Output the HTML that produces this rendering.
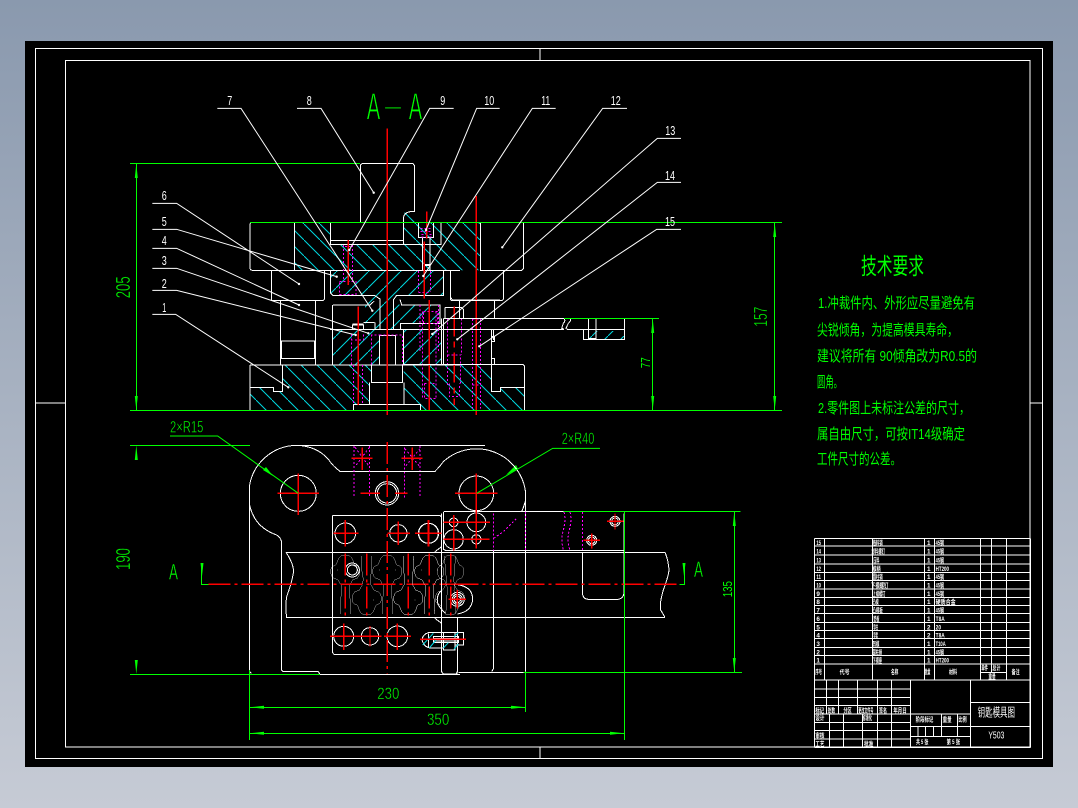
<!DOCTYPE html>
<html lang="zh"><head><meta charset="utf-8"><title>钥匙模具图</title>
<style>
html,body{margin:0;padding:0;width:1078px;height:808px;overflow:hidden;background:linear-gradient(180deg,#8a99ae 0%,#c6cbd5 100%)}
svg{position:absolute;left:0;top:0;display:block}
.l *{vector-effect:non-scaling-stroke}
.w{fill:none;stroke:#fff;stroke-width:1;shape-rendering:crispEdges}
.g{fill:none;stroke:#00ff00;stroke-width:1;shape-rendering:crispEdges}
.r{fill:none;stroke:#ff0000;stroke-width:1.2;shape-rendering:crispEdges}
.c{stroke-dasharray:22 4 3 4}
.p{fill:none;stroke:#ff00ff;stroke-width:1;stroke-dasharray:2 2;shape-rendering:crispEdges}
.ld{fill:none;stroke:#fff;stroke-width:1}
.gl{fill:none;stroke:#00ff00;stroke-width:1}
text{font-family:"Liberation Sans","Noto Sans CJK SC",sans-serif}
.gt{fill:#00ff00;stroke:#000;stroke-width:.4}
.gs{fill:#00ff00}
.gT{fill:#00ff00;stroke:#000;stroke-width:.9}
.wt{fill:#fff;font-size:13px}
.tb text{fill:#fff;font-size:19px;font-weight:700}
.cn{fill:#00ff00;font-size:15px}
</style></head><body>
<svg width="1078" height="808" viewBox="0 0 1078 808" xmlns="http://www.w3.org/2000/svg">
<defs>
<pattern id="hb" width="16" height="16" patternUnits="userSpaceOnUse"><path d="M-1 -1L17 17" stroke="#00d8e0" stroke-width="1" fill="none"/></pattern>
<pattern id="hf" width="16" height="16" patternUnits="userSpaceOnUse"><path d="M17 -1L-1 17" stroke="#00d8e0" stroke-width="1" fill="none"/></pattern>
<g id="key"><path d="M-16 132L-14 85L-10 62L-13 45L-22 30Q-30 26 -36 24Q-44 16 -44 4Q-44 -8 -36 -12Q-28 -14 -26 -20Q-20 -40 -10 -44H10Q20 -40 26 -20Q28 -14 36 -12Q44 -8 44 4Q44 16 36 24Q30 26 22 30L13 45L11 62L14 85L16 132"/></g>
</defs>
<rect x="25" y="41" width="1028" height="726" fill="#000"/>

<!-- hatches -->
<g fill="url(#hb)">
<polygon points="294,222.5 330.5,222.5 330.5,244.5 403.5,244.5 403.5,222.5 480.7,222.5 480.7,270.3 294,270.3"/>
<polygon points="403.5,222.5 403.5,213 410,211 414.7,211 414.7,222.5"/>
<polygon points="282.3,365 371.3,365 371.3,382.7 369.3,382.7 369.3,404 353.3,404 353.3,410 250,410 250,387.3 273.3,387.3 273.3,391.3 282.3,391.3"/>
<polygon points="403.7,365 491.7,365 491.7,391.3 500.7,391.3 500.7,387.3 524.3,387.3 524.3,410 420.7,410 420.7,404 404.3,404 404.3,382.7 403.7,382.7"/>
</g>
<g fill="url(#hf)">
<polygon points="330.5,270.3 443.7,270.3 443.7,295.3 398,295.3 393.5,300 393.5,329 381,329 381,300 375,295.3 330.5,295.3"/>
<polygon points="400,305 440,305 440,323 400,323 400,329 393.5,329 393.5,300"/>
<polygon points="365,296 381,296 381,329 365,329"/>
<polygon points="332.3,329.5 380,329.5 380,365 332.3,365"/>
<polygon points="403.5,329.5 441.5,329.5 441.5,365 403.5,365"/>
<polygon points="583,331 624.5,331 624.5,339.5 583,339.5"/>
</g>

<!-- frame -->
<g class="w">
<rect x="35.5" y="48.5" width="1007" height="710"/>
<rect x="65.5" y="60.5" width="964.5" height="686.5"/>
<path d="M35 403H65M1030 403H1043M540 48V60M540 747V759"/>
</g>

<!-- Front view Z1 (left) -->
<g class="l" transform="translate(120 80) scale(.33333)">
<g class="w">
<path d="M721 427V255L728 250H878L884 257V395H870Q852 398 850 415V493"/>
<path d="M396 427Q390 428 390 434V565Q392 571 398 571H1020M523 427V571M631 427V493H850M631 481H850"/>
<path d="M454 571V662H608Q614 660 614 652V571"/>
<path d="M481 662V855M587 662V855M481 783H587M484 783V835M584 783V835M481 835H587"/>
<path d="M390 855H1020M390 855V990M390 922H460V934H487V855"/>
</g>
</g>

<!-- Center Z9 -->
<g class="l" transform="translate(330 215) scale(.33333)">
<g class="w">
<path d="M265 22V68H310V22M333 22V88H220M277 68V167M300 68V167M285 148H300M285 152H300"/>
<path d="M2 167V235L8 241H120L133 241L150 252V343M190 343V255L200 241H340V167"/>
<path d="M210 253L215 270H330V325H212V343"/>
<path d="M7 448V275Q7 270 12 270H120L133 258M100 322H133M135 322V343M67 343V330H100V343M67 327H100"/>
<path d="M0 343H510M148 448V362H197V448M220 343V448"/>
<path d="M124 450V502H218V450M118 502V568H222V502M70 585V568H272V585"/>
<path d="M335 310V448M340 310V448M340 310H510M362 167V248L368 255H510M388 255V310M493 255V310"/>
<path d="M345 310V280Q345 277 350 277H395L400 283V310"/>
<path d="M485 343V448M490 343V375"/>
</g>
<g class="p">
<path d="M40 90V200M68 90V200M45 95H62M28 200H78V238H28ZM28 238H78"/>
<path d="M265 168V230M302 168V230M265 232H302"/>
<path d="M272 40H306M272 50H306M275 66H305M275 58H305"/>
<path d="M270 270V410M325 270V410M280 290H322V325H280ZM278 290V550M318 290V550M283 505V550H318M283 505H318"/>
<path d="M125 448V360H148M197 360H218V448M148 360H197"/>
<path d="M65 358V450M100 358V375H67M70 450V565M98 450V565"/>
<path d="M352 310V420M395 310V420M352 420H392V510M352 420V510M358 505V545H388V505"/>
<path d="M428 312V580M452 312V580M428 312H452M428 510H452"/>
</g>
<g class="r">
<path d="M172 -260V600"/>
<path d="M439 -57V600"/>
<path d="M55 75V210M290 -10V70M283 80V250M298 255V585M85 275V570"/>
<path d="M373 275V570" style="stroke-dasharray:30 5 6 5"/>
</g>
</g>

<!-- Front view right Z2 -->
<g class="l" transform="translate(400 80) scale(.33333)">
<g class="w">
<path d="M240 427H371V565L365 571H240M242 427V571"/>
<path d="M130 715H492M130 748H492M492 715Q498 722 490 730L485 745L492 748M510 715Q515 722 505 730L498 745L502 748H550M550 748H673M673 715V778H550V748M565 715V775H588V715"/>
<path d="M275 748V770H283V785H275V835H283V853M10 853H368L373 858V990M275 853V934H302V922H373"/>
<path d="M151 571V655Q151 662 158 662H305Q311 660 311 652V571"/>
</g>
</g>

<!-- green dim front -->
<g class="g">
<path d="M130 163.5H360M136.5 163.5V410M130 410.5H782M250 222.5H782M774.5 222.5V410M564 318.5H659M652.5 318.5V410"/>
</g>
<g fill="#00ff00">
<polygon points="136.3,163.5 134.8,178 137.8,178"/><polygon points="136.3,410 134.8,396 137.8,396"/>
<polygon points="774.7,222.5 773.2,237 776.2,237"/><polygon points="774.7,410 773.2,396 776.2,396"/>
<polygon points="652.7,318.5 651.2,333 654.2,333"/><polygon points="652.7,410 651.2,396 654.2,396"/>
<polygon points="136.3,445.3 134.8,460 137.8,460"/><polygon points="136.3,674 134.8,660 137.8,660"/>
<polygon points="734.3,511.3 732.8,526 735.8,526"/><polygon points="734.3,672.3 732.8,658 735.8,658"/>
<polygon points="249.3,707.3 264,705.8 264,708.8"/><polygon points="525.7,707.3 511,705.8 511,708.8"/>
<polygon points="249.3,733.3 264,731.8 264,734.8"/><polygon points="624.3,733.3 610,731.8 610,734.8"/>
<polygon points="202,576 200.5,563 203.5,563"/><polygon points="684,576 682.5,563 685.5,563"/>
<polygon points="273,476 263,470 266,467"/><polygon points="506,475 518,469 516,465"/>
</g>

<!-- leaders -->
<g class="l" transform="translate(120 80) scale(.33333)">
<path class="ld" d="M292 85H363L757 692M531 85H603L761 338M1001 85H929L688 510M97 370H170L537 612M97 448H170L650 590M97 505H170L537 675M97 565H170L745 760M97 631H170L707 765M97 703H167L505 922"/>
</g>
<g class="l" transform="translate(400 80) scale(.33333)">
<path class="ld" d="M299 85H230L78 450M467 85H397L70 588M681 85H608L307 502M843 175H772L97 762M843 307H772L172 778M843 448H770L238 799"/>
</g>
<g fill="#fff">
<circle cx="372.3" cy="310.7" r="1.2"/><circle cx="373.7" cy="192.7" r="1.2"/><circle cx="349.3" cy="250" r="1.2"/><circle cx="299" cy="284" r="1.2"/><circle cx="336.7" cy="276.7" r="1.2"/><circle cx="299" cy="305" r="1.2"/><circle cx="368.3" cy="333.3" r="1.2"/><circle cx="355.7" cy="335" r="1.2"/><circle cx="288.3" cy="387.3" r="1.2"/>
<circle cx="426" cy="230" r="1.2"/><circle cx="423.3" cy="276" r="1.2"/><circle cx="502.3" cy="247.3" r="1.2"/><circle cx="432.3" cy="334" r="1.2"/><circle cx="457.3" cy="339.3" r="1.2"/><circle cx="479.3" cy="346.3" r="1.2"/>
</g>

<!-- Plan view left Z3 -->
<g class="l" transform="translate(120 410) scale(.33333)">
<g class="w">
<path d="M1020 106H530A145 145 0 0 0 388 230V785L395 790"/>
<path d="M530 106Q590 108 625 148Q640 170 660 184H946"/>
<path d="M388 280Q400 350 470 375Q485 385 485 400V780L490 785H595L600 793H1020"/>
<circle cx="535" cy="250" r="54"/>
<circle cx="801" cy="250" r="35"/><circle cx="801" cy="250" r="29"/>
<path d="M642 316H960L965 321V785M642 316Q637 316 637 321V727L642 733H965M965 410L945 425M945 625L965 640"/>
<circle cx="676" cy="370" r="31"/><circle cx="835" cy="370" r="26"/><circle cx="926" cy="370" r="30"/>
<circle cx="671" cy="679" r="30"/><circle cx="750" cy="679" r="26"/><circle cx="832" cy="679" r="31"/>
<path d="M498 427H1020M498 622H1020M498 427Q520 460 521 485Q515 520 500 560Q495 590 500 622"/>
<use href="#key" transform="translate(676 480) scale(1 1)"/>
<use href="#key" transform="translate(802 480)"/>
<use href="#key" transform="translate(928 480)"/>
<use href="#key" transform="translate(740 570) scale(1 -1)"/>
<use href="#key" transform="translate(865 570) scale(1 -1)"/>
<use href="#key" transform="translate(990 570) scale(1 -1)"/>
<circle cx="697" cy="480" r="21"/><circle cx="697" cy="480" r="15"/>
<path d="M965 785L970 793H1008L1012 785"/>
<path d="M970 310Q970 304 976 304H1020"/>
</g>
<g class="p">
<path d="M702 108V262M748 108V262M853 112V262M900 108V262M705 112L748 170M748 112L705 170M855 116L900 170M900 116L855 170"/>
</g>
<g class="r">
<path d="M535 190V315M472 250H597M727 113V180M695 145H758M877 113V180M845 145H908M722 250H780M825 250H862"/>
<path d="M640 370H716M676 330V410M803 370H870M835 335V405M886 370H964M926 330V410M630 679H712M671 640V720M712 679H784M750 648V710M792 679H873M832 640V720"/>
<path class="c" d="M802 96V790"/>
<path class="c" d="M265 523H1020"/>
<path class="c" d="M676 430V620M740 430V620M865 430V620M928 430V620M992 430V620" style="stroke-dasharray:22 4 3 4"/>
</g>
<g fill="#fff"><circle cx="652" cy="480" r="1"/><circle cx="778" cy="480" r="1"/><circle cx="826" cy="480" r="1"/><circle cx="904" cy="480" r="1"/><circle cx="952" cy="480" r="1"/><circle cx="760" cy="570" r="1"/><circle cx="885" cy="570" r="1"/></g>
<path class="g" d="M245 460V523H265"/>
<path class="gl" d="M150 78H293L535 250"/>
</g>

<!-- Plan view right Z4 -->
<g class="l" transform="translate(400 420) scale(.33333)">
<g class="w">
<path d="M105 154H0M105 154Q120 140 130 125A148 148 0 0 1 377 220V755"/>
<path d="M0 76H255M377 240Q370 265 365 275"/>
<circle cx="229" cy="220" r="52"/>
<path d="M490 274H136Q130 274 130 280V388L136 391H672V280M125 280V397"/>
<path d="M0 397H795M0 592H795M795 397Q805 420 807 450Q805 470 790 510Q778 550 782 570L795 592"/>
<path d="M281 391V745L275 755M377 391V755M175 757H377"/>
<path d="M547 397V520Q550 538 565 538H655Q670 535 672 520V391"/>
<circle cx="229" cy="307" r="28"/><circle cx="161" cy="307" r="13"/><circle cx="161" cy="358" r="29"/><circle cx="229" cy="358" r="14"/>
<circle cx="645" cy="304" r="15"/><circle cx="645" cy="304" r="10"/><circle cx="575" cy="361" r="15"/><circle cx="575" cy="361" r="10"/>
<circle cx="85" cy="340" r="30"/>
<use href="#key" transform="translate(88 450)"/>
<use href="#key" transform="translate(25 540) scale(1 -1)"/>
<use href="#key" transform="translate(152 450) scale(.9 1)"/>
<path d="M172 494Q218 500 218 538Q215 575 172 582M125 510Q105 530 115 555Q125 570 135 578"/>
<circle cx="172" cy="538" r="21"/><circle cx="172" cy="538" r="15"/><circle cx="172" cy="538" r="10"/>
<path d="M125 397V755L130 762H170L173 755M172 592V757M0 763H130"/>
<path d="M120 703H0M105 595L125 610"/>
<path d="M66 658Q70 640 90 637H190V675H165V690H130V684H90Q70 680 66 658M85 640V682M130 637V684M165 637V690M100 650H175V668H100ZM100 655H175V663H100Z"/>
</g>
<path d="M68 675L100 640M88 684L108 660M130 684L145 668M162 688L175 672M162 650L175 638" fill="none" stroke="#00d8e0" stroke-width="1"/>
<g class="p">
<path d="M281 280V391M377 276V391M547 276V391M281 355L310 335L350 295M492 276Q498 300 490 330Q482 360 490 391M510 276Q516 300 508 330Q500 360 510 391"/>
</g>
<g class="r">
<path d="M229 160V385M165 220H292M130 307H270M130 358H268M161 285V392M621 304H670M645 280V328M551 361H600M575 340V385M145 538H198M172 510V566M60 658H198M-5 340H30M45 340H124M85 300V380"/>
<path class="c" d="M170 493H838"/>
<path class="c" d="M25 400V590M88 400V590M152 400V590"/>
</g>
<path class="g" d="M838 493H853V430M490 274H1022M370 757H1026M1003 274V757M673 274V960M377 755V872"/>
<path class="gl" d="M600 85H458L230 220"/>
</g>

<path class="g" d="M249.5 670V740M249.5 707.5H525.5M249.5 733.5H624.5M525.5 674V712"/>
<path class="g" d="M130 445.5H250M130 674.5H320"/>

<!-- labels -->
<g class="wt" text-anchor="middle">
<text x="229.7" y="105" textLength="5" lengthAdjust="spacingAndGlyphs">7</text><text x="309.3" y="105" textLength="5" lengthAdjust="spacingAndGlyphs">8</text><text x="442.7" y="105" textLength="5" lengthAdjust="spacingAndGlyphs">9</text>
<text x="489.3" y="105" textLength="10" lengthAdjust="spacingAndGlyphs">10</text>
<text x="545.7" y="105" textLength="9" lengthAdjust="spacingAndGlyphs">11</text>
<text x="615.7" y="105" textLength="10" lengthAdjust="spacingAndGlyphs">12</text>
<text x="670.3" y="135" textLength="10" lengthAdjust="spacingAndGlyphs">13</text>
<text x="670" y="180" textLength="10" lengthAdjust="spacingAndGlyphs">14</text>
<text x="670" y="226" textLength="10" lengthAdjust="spacingAndGlyphs">15</text>
<text x="164.3" y="200" textLength="5" lengthAdjust="spacingAndGlyphs">6</text><text x="164.3" y="226" textLength="5" lengthAdjust="spacingAndGlyphs">5</text><text x="164.3" y="245" textLength="5" lengthAdjust="spacingAndGlyphs">4</text><text x="164.3" y="265" textLength="5" lengthAdjust="spacingAndGlyphs">3</text><text x="164.3" y="288" textLength="5" lengthAdjust="spacingAndGlyphs">2</text><text x="164.3" y="312" textLength="4" lengthAdjust="spacingAndGlyphs">1</text>
</g>
<text class="gT" x="366.7" y="119.3" font-size="38" textLength="13.5" lengthAdjust="spacingAndGlyphs">A</text>
<text class="gT" x="385" y="112" font-size="16" textLength="16" lengthAdjust="spacingAndGlyphs" style="stroke-width:.2">—</text>
<text class="gT" x="408.7" y="119.3" font-size="38" textLength="13.5" lengthAdjust="spacingAndGlyphs">A</text>
<text class="gt" transform="translate(130 298.3) rotate(-90)" font-size="20" textLength="22" lengthAdjust="spacingAndGlyphs">205</text>
<text class="gt" transform="translate(130 570) rotate(-90)" font-size="20" textLength="22" lengthAdjust="spacingAndGlyphs">190</text>
<text class="gt" transform="translate(767 326.7) rotate(-90)" font-size="18" textLength="20" lengthAdjust="spacingAndGlyphs">157</text>
<text class="gs" transform="translate(650 368.3) rotate(-90)" font-size="13" textLength="11" lengthAdjust="spacingAndGlyphs">77</text>
<text class="gs" transform="translate(732 597.3) rotate(-90)" font-size="13" textLength="16.3" lengthAdjust="spacingAndGlyphs">135</text>
<text class="gt" x="377.3" y="699" font-size="17" textLength="22" lengthAdjust="spacingAndGlyphs">230</text>
<text class="gt" x="427" y="725" font-size="17" textLength="22.3" lengthAdjust="spacingAndGlyphs">350</text>
<text class="gt" x="170" y="432.3" font-size="17" textLength="33.3" lengthAdjust="spacingAndGlyphs">2×R15</text>
<text class="gt" x="561.7" y="444" font-size="17" textLength="32.7" lengthAdjust="spacingAndGlyphs">2×R40</text>
<text class="gt" x="169" y="579.5" font-size="22" textLength="9" lengthAdjust="spacingAndGlyphs">A</text>
<text class="gt" x="694" y="577" font-size="22" textLength="9" lengthAdjust="spacingAndGlyphs">A</text>

<!-- technical notes -->
<text x="861" y="274" font-size="23" fill="#00ff00" textLength="63" lengthAdjust="spacingAndGlyphs">技术要求</text>
<g class="cn">
<text x="818" y="308" textLength="157" lengthAdjust="spacingAndGlyphs">1.冲裁件内、外形应尽量避免有</text>
<text x="817" y="335" textLength="141" lengthAdjust="spacingAndGlyphs">尖锐倾角，为提高模具寿命，</text>
<text x="817" y="361" textLength="160" lengthAdjust="spacingAndGlyphs">建议将所有 90倾角改为R0.5的</text>
<text x="817" y="387" textLength="25" lengthAdjust="spacingAndGlyphs">圆角。</text>
<text x="818" y="413" textLength="152" lengthAdjust="spacingAndGlyphs">2.零件图上未标注公差的尺寸，</text>
<text x="817" y="439" textLength="148" lengthAdjust="spacingAndGlyphs">属自由尺寸，可按IT14级确定</text>
<text x="817" y="464" textLength="84" lengthAdjust="spacingAndGlyphs">工件尺寸的公差。</text>
</g>

<!-- title block Z5 -->
<g class="l tb" transform="translate(805 530) scale(.33333)">
<g class="w">
<path d="M28 25H677M28 48H677M28 75H677M28 102H677M28 127H677M28 151H677M28 177H677M28 202H677M28 226H677M28 251H677M28 277H677M28 302H677M28 326H677M28 352H677M28 377H677M28 402H677M28 450H677"/>
<path d="M28 25V652M59 25V450M203 25V450M359 25V450M388 25V450M527 25V450M559 25V427M604 25V450M677 25V652M527 427H604"/>
<path d="M28 477H317M28 502H317M28 527H317M28 552H497M28 577H317M28 602H317M28 627H317M28 652H677"/>
<path d="M65 450V552M100 450V552M158 450V552M217 450V552M260 450V552M317 450V652M74 552V652M116 552V652M172 552V652M217 552V652M260 552V652M497 450V652"/>
<path d="M317 590H497M317 620H497M410 552V620M457 552V620M339 590V620M362 590V620M385 590V620M497 518H677M497 590H677"/>
</g>
<g style="font-size:18px">
<text x="34" y="45" textLength="14" lengthAdjust="spacingAndGlyphs">15</text><text x="34" y="71" textLength="14" lengthAdjust="spacingAndGlyphs">14</text><text x="34" y="98" textLength="14" lengthAdjust="spacingAndGlyphs">13</text><text x="34" y="123" textLength="14" lengthAdjust="spacingAndGlyphs">12</text><text x="34" y="147" textLength="14" lengthAdjust="spacingAndGlyphs">11</text><text x="34" y="173" textLength="14" lengthAdjust="spacingAndGlyphs">10</text><text x="34" y="198">9</text><text x="34" y="222">8</text><text x="34" y="247">7</text><text x="34" y="273">6</text><text x="34" y="298">5</text><text x="34" y="322">4</text><text x="34" y="348">3</text><text x="34" y="373">2</text><text x="34" y="398">1</text>
</g>
<text x="203" y="45" textLength="30" lengthAdjust="spacingAndGlyphs">挡料销</text><text x="200" y="71" textLength="40" lengthAdjust="spacingAndGlyphs">卸料螺钉</text><text x="205" y="98" textLength="18" lengthAdjust="spacingAndGlyphs">压料</text><text x="203" y="123" textLength="24" lengthAdjust="spacingAndGlyphs">模柄</text><text x="203" y="147" textLength="30" lengthAdjust="spacingAndGlyphs">圆柱销</text><text x="198" y="173" textLength="52" lengthAdjust="spacingAndGlyphs">下模螺钉</text><text x="203" y="198" textLength="38" lengthAdjust="spacingAndGlyphs">上模螺钉</text><text x="203" y="222" textLength="18" lengthAdjust="spacingAndGlyphs">凸模</text><text x="203" y="247" textLength="30" lengthAdjust="spacingAndGlyphs">凸模板</text><text x="205" y="273" textLength="18" lengthAdjust="spacingAndGlyphs">垫板</text><text x="205" y="298" textLength="14" lengthAdjust="spacingAndGlyphs">导柱</text><text x="205" y="322" textLength="14" lengthAdjust="spacingAndGlyphs">导套</text><text x="203" y="348" textLength="20" lengthAdjust="spacingAndGlyphs">凹模</text><text x="203" y="373" textLength="28" lengthAdjust="spacingAndGlyphs">圆柱销</text><text x="203" y="398" textLength="28" lengthAdjust="spacingAndGlyphs">下模座</text>
<text x="366" y="45">1</text><text x="366" y="71">1</text><text x="366" y="98">1</text><text x="366" y="123">1</text><text x="366" y="147">1</text><text x="366" y="173">1</text><text x="366" y="198">1</text><text x="366" y="222">1</text><text x="366" y="247">1</text><text x="366" y="273">1</text><text x="366" y="298">2</text><text x="366" y="322">2</text><text x="366" y="348">1</text><text x="366" y="373">1</text><text x="366" y="398">1</text>
<text x="392" y="45" textLength="25" lengthAdjust="spacingAndGlyphs">45钢</text><text x="392" y="71" textLength="25" lengthAdjust="spacingAndGlyphs">45钢</text><text x="392" y="98" textLength="25" lengthAdjust="spacingAndGlyphs">45钢</text><text x="392" y="123" textLength="40" lengthAdjust="spacingAndGlyphs">HT200</text><text x="392" y="147" textLength="25" lengthAdjust="spacingAndGlyphs">45钢</text><text x="392" y="173" textLength="25" lengthAdjust="spacingAndGlyphs">45钢</text><text x="392" y="198" textLength="25" lengthAdjust="spacingAndGlyphs">45钢</text><text x="392" y="222" textLength="60" lengthAdjust="spacingAndGlyphs">硬质合金</text><text x="392" y="247" textLength="25" lengthAdjust="spacingAndGlyphs">45钢</text><text x="392" y="273" textLength="27" lengthAdjust="spacingAndGlyphs">T8A</text><text x="392" y="298" textLength="16" lengthAdjust="spacingAndGlyphs">20</text><text x="392" y="322" textLength="27" lengthAdjust="spacingAndGlyphs">T8A</text><text x="392" y="348" textLength="30" lengthAdjust="spacingAndGlyphs">T10A</text><text x="392" y="373" textLength="25" lengthAdjust="spacingAndGlyphs">45钢</text><text x="392" y="398" textLength="40" lengthAdjust="spacingAndGlyphs">HT200</text>
<text x="31" y="432" textLength="20" lengthAdjust="spacingAndGlyphs">序号</text><text x="104" y="432" textLength="30" lengthAdjust="spacingAndGlyphs">代号</text><text x="258" y="432" textLength="22" lengthAdjust="spacingAndGlyphs">名称</text><text x="360" y="432" textLength="16" lengthAdjust="spacingAndGlyphs">数量</text><text x="432" y="432" textLength="24" lengthAdjust="spacingAndGlyphs">材料</text><text x="529" y="420" textLength="20" lengthAdjust="spacingAndGlyphs">单件</text><text x="562" y="420" textLength="24" lengthAdjust="spacingAndGlyphs">总计</text><text x="550" y="446" textLength="22" lengthAdjust="spacingAndGlyphs">重量</text><text x="620" y="432" textLength="24" lengthAdjust="spacingAndGlyphs">备注</text>
<text x="31" y="547" textLength="26" lengthAdjust="spacingAndGlyphs">标记</text><text x="68" y="547" textLength="22" lengthAdjust="spacingAndGlyphs">处数</text><text x="115" y="547" textLength="25" lengthAdjust="spacingAndGlyphs">分区</text><text x="160" y="547" textLength="45" lengthAdjust="spacingAndGlyphs">更改文件号</text><text x="222" y="547" textLength="24" lengthAdjust="spacingAndGlyphs">签名</text><text x="265" y="547" textLength="40" lengthAdjust="spacingAndGlyphs">年月日</text>
<text x="31" y="570" textLength="27" lengthAdjust="spacingAndGlyphs">设计</text><text x="173" y="570" textLength="28" lengthAdjust="spacingAndGlyphs">标准化</text>
<text x="31" y="622" textLength="27" lengthAdjust="spacingAndGlyphs">审核</text><text x="31" y="648" textLength="27" lengthAdjust="spacingAndGlyphs">工艺</text><text x="177" y="648" textLength="28" lengthAdjust="spacingAndGlyphs">批准</text>
<text x="332" y="575" textLength="53" lengthAdjust="spacingAndGlyphs">阶段标记</text><text x="413" y="575" textLength="27" lengthAdjust="spacingAndGlyphs">重量</text><text x="460" y="575" textLength="25" lengthAdjust="spacingAndGlyphs">比例</text>
<text x="333" y="642" textLength="37" lengthAdjust="spacingAndGlyphs">共 5 张</text><text x="425" y="642" textLength="40" lengthAdjust="spacingAndGlyphs">第 5 张</text>
<text x="518" y="560" style="font-size:35px;font-weight:400" textLength="112" lengthAdjust="spacingAndGlyphs">钥匙模具图</text>
<text x="550" y="625" style="font-size:30px;font-weight:400" textLength="48" lengthAdjust="spacingAndGlyphs">Y503</text>
</g>
</svg>
</body></html>
